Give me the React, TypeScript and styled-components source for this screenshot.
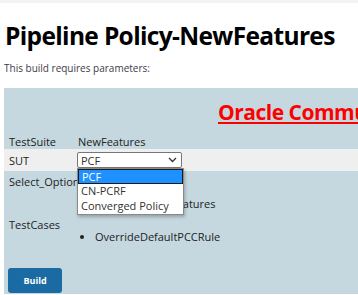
import React from 'react';
import styled, { createGlobalStyle } from 'styled-components';

const GlobalStyle = createGlobalStyle`
  html, body {
    margin: 0;
    padding: 0;
    background: #fff;
    overflow: hidden;
  }
  body {
    font-family: "Open Sans", "Noto Sans", sans-serif;
    color: #222;
  }
`;

const TopStrip = styled.div`
  height: 3px;
  background: #f3f3f3;
`;

const Page = styled.div`
  padding: 0 0 0 4px;
  width: 700px;
`;

const Title = styled.h1`
  margin: 17px 0 0 1px;
  font-size: 24.5px;
  line-height: 32px;
  font-weight: 700;
  color: #000;
  letter-spacing: -0.65px;
`;

const Subtitle = styled.p`
  margin: 9px 0 0 0;
  font-size: 10px;
  line-height: 14px;
  color: #3f3a4a;
`;

const Panel = styled.div`
  margin-top: 13px;
  background: #c5d8df;
  padding-bottom: 1px;
  position: relative;
`;

const Banner = styled.div`
  height: 45px;
  padding-left: 214px;
  box-sizing: border-box;
  padding-top: 10px;
`;

const BannerLink = styled.a`
  font-size: 21px;
  font-weight: 700;
  color: #ff0000;
  letter-spacing: -0.5px;
  text-decoration: underline;
  text-decoration-thickness: 2px;
  text-underline-offset: 2px;
  white-space: nowrap;
`;

const Row = styled.div<{ $shade?: boolean; $height: number }>`
  display: grid;
  grid-template-columns: 69px 1fr;
  align-items: center;
  height: ${(p) => p.$height}px;
  padding-left: 5px;
  background: ${(p) => (p.$shade ? '#efefef' : 'transparent')};
  font-size: 11px;
  color: #222;
`;

const TopRow = styled(Row)`
  align-items: start;
`;

const Label = styled.span<{ $top?: number }>`
  padding-top: ${(p) => p.$top ?? 0}px;
`;

const SelectBox = styled.div`
  width: 105px;
  height: 16px;
  box-sizing: border-box;
  border: 1px solid #767676;
  border-radius: 2px;
  background: #fff;
  display: flex;
  align-items: center;
  justify-content: space-between;
  padding: 0 4px 0 3px;
  margin-left: -1px;
  font-size: 11px;
  color: #333;
  position: relative;
`;

const Menu = styled.div`
  position: absolute;
  left: -1px;
  top: 15px;
  width: 105px;
  background: #fff;
  border: 1px solid #8a8a8a;
  box-shadow: 1px 2px 3px rgba(0, 0, 0, 0.25);
  z-index: 5;
`;

const Option = styled.div<{ $active?: boolean }>`
  height: 15px;
  line-height: 14px;
  padding-left: 3px;
  box-sizing: border-box;
  font-size: 11px;
  color: ${(p) => (p.$active ? '#fff' : '#333')};
  background: ${(p) => (p.$active ? '#1e90ff' : '#fff')};
  border: ${(p) => (p.$active ? '1px solid #1a1a1a' : 'none')};
`;

const CheckLine = styled.div`
  padding-left: 70px;
  margin-top: 25px;
`;

const Bullets = styled.ul`
  margin: 0;
  padding: 0 0 0 17px;
  list-style: disc;
  li {
    margin-top: 12px;
  }
`;

const Footer = styled.div`
  padding: 16px 0 0 4px;
`;

const BuildButton = styled.button`
  width: 54px;
  height: 25px;
  border: none;
  border-radius: 3px;
  background: #1a6ba3;
  color: #fff;
  font-family: "Open Sans", "Noto Sans", sans-serif;
  font-weight: 700;
  font-size: 9px;
  cursor: pointer;
`;

const Chevron = () => (
  <svg width="9" height="6" viewBox="0 0 9 6">
    <path d="M1 1 L4.5 4.5 L8 1" stroke="#333" strokeWidth="1.3" fill="none" />
  </svg>
);

export default function App() {
  return (
    <>
      <GlobalStyle />
      <TopStrip />
      <Page>
        <Title>Pipeline Policy-NewFeatures</Title>
        <Subtitle>This build requires parameters:</Subtitle>
        <Panel>
          <Banner>
            <BannerLink>Oracle Communications Cloud Native Core Policy</BannerLink>
          </Banner>
          <Row $height={16}>
            <span>TestSuite</span>
            <span>NewFeatures</span>
          </Row>
          <Row $shade $height={22}>
            <span>SUT</span>
            <div>
              <SelectBox>
                <span>PCF</span>
                <Chevron />
                <Menu>
                  <Option $active>PCF</Option>
                  <Option>CN-PCRF</Option>
                  <Option>Converged Policy</Option>
                </Menu>
              </SelectBox>
            </div>
          </Row>
          <TopRow $height={46}>
            <Label $top={3}>Select_Option</Label>
            <CheckLine>NewFeatures</CheckLine>
          </TopRow>
          <TopRow $height={34}>
            <Label>TestCases</Label>
            <Bullets>
              <li>OverrideDefaultPCCRule</li>
            </Bullets>
          </TopRow>
          <Footer>
            <BuildButton>Build</BuildButton>
          </Footer>
        </Panel>
      </Page>
    </>
  );
}
